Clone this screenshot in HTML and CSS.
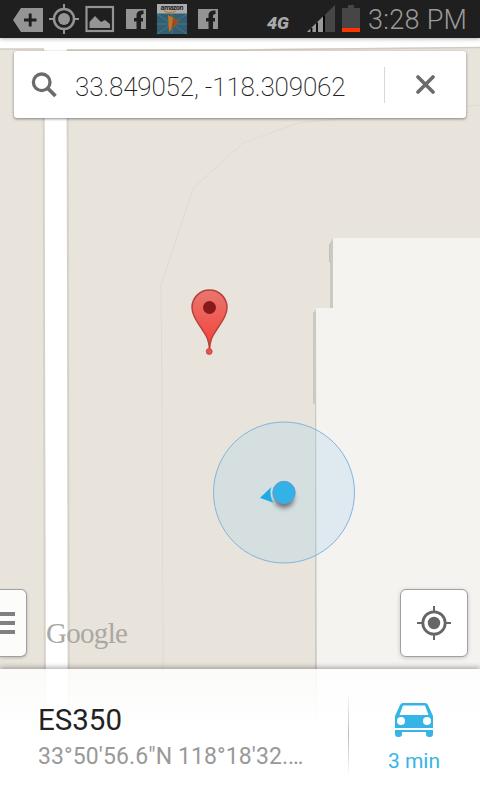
FILE: index.html
```html
<!DOCTYPE html>
<html lang="en">
<head>
<meta charset="utf-8">
<title>Map</title>
<link rel="stylesheet" href="styles.css">
</head>
<body>
<div class="screen">
  <svg class="map" width="480" height="800" viewBox="0 0 480 800">
    <defs>
      <linearGradient id="pin" x1="0" y1="0" x2="0" y2="1"><stop offset="0" stop-color="#e97770"/><stop offset="1" stop-color="#f43f35"/></linearGradient>
      <filter id="soft" x="-50%" y="-50%" width="200%" height="200%"><feGaussianBlur stdDeviation="2.5"/></filter>
    </defs>
    <rect width="480" height="800" fill="#e8e4db"/>
    <path d="M0 37H480V47L240 49H0Z" fill="#fff"/>
    <path d="M0 49H44M67 50H240L480 47.500" stroke="#d3cbc0" stroke-width="1.500" fill="none"/>
    <path d="M44 48H67L68 800H46Z" fill="#fff"/>
    <path d="M43.500 50L45 800M67.500 50L69 800" stroke="#d8d1c7" stroke-width="2" fill="none"/>
    <path d="M163.500 800L162 400L161 286L193 188L243 143L298 123L480 105" stroke="#dedbd4" fill="none"/>
    <path d="M330 243L333 238V308H330ZM314 312L317 308V800H315V404H313V312Z" fill="#cbc9c1"/>
    <path d="M329 244H330V262H329Z" fill="#c3c0b7"/>
    <path d="M333 238H480V800H317L316 308H333Z" fill="#f4f3ef"/>
    <circle cx="284" cy="492.500" r="70.500" fill="#9dcff0" fill-opacity=".25" stroke="#86b3dd"/>
    <circle cx="284" cy="498" r="10" fill="#333" opacity=".65" filter="url(#soft)"/>
    <path d="M259.500 498L271.500 486.500Q269 496 274.500 503.500Z" fill="#20aae5" stroke="#dceaf0" stroke-width=".5"/>
    <circle cx="284" cy="492.500" r="11.200" fill="#34b2e8" stroke="#5b9fc9"/>
    <path d="M209.500 350C209 339 206.500 336 202.500 330C197 321.500 192 315 192 307.500A17.500 17.500 0 0 1 227 307.500C227 315 222 321.500 216.500 330C212.500 336 210 339 209.500 350Z" fill="url(#pin)" stroke="#b6403a" stroke-width="1.500"/>
    <circle cx="209.500" cy="307.500" r="6.500" fill="#851b18"/>
    <circle cx="209.200" cy="351.500" r="3" fill="#ed5249" stroke="#c33f38" stroke-width=".8"/>
  </svg>

  <header class="status">
    <svg class="status-icons" width="360" height="38" viewBox="0 0 360 38">
      <path d="M13 20L21 8H43V32H21Z" fill="#949494"/>
      <path d="M24 20H36.500M30.200 13.500V26.500" stroke="#1f1f1f" stroke-width="2.900"/>
      <g stroke="#949494" fill="none"><circle cx="64" cy="19" r="10" stroke-width="2.500"/><path d="M64 4V10M64 28V34M49 19H55M73 19H79" stroke-width="2"/></g>
      <circle cx="64" cy="19" r="6" fill="#949494"/>
      <rect x="86.500" y="7" width="26.500" height="24" stroke="#949494" stroke-width="2.200" fill="none"/>
      <path d="M89.500 28V22L95 16L101 22L105 20L110 24V28Z" fill="#949494"/>
      <path d="M126 9H146V29H141V21.500H143V18H141V15.500Q141 14 143.500 14V10.500Q136.500 10 136.500 15V18H134V21.500H136.500V29H126Z" fill="#949494"/>
      <path d="M198 9H218V29H213V21.500H215V18H213V15.500Q213 14 215.500 14V10.500Q208.500 10 208.500 15V18H206V21.500H208.500V29H198Z" fill="#949494"/>
      <rect x="157" y="4" width="30" height="30" fill="#345e71"/>
      <path d="M157 14L187 34M157 34L187 14M172 13V34M157 24H187" stroke="#3f7085" stroke-width="1.500"/>
      <rect x="157" y="4" width="30" height="9.500" fill="#acacac"/>
      <text class="amazon" x="160.500" y="9.800" textLength="23">amazon</text>
      <path d="M164 11Q170 14 176 11" stroke="#bd7b21" stroke-width="1.200" fill="none"/>
      <path d="M168 15L179 21L169 32Z" fill="#c27620"/><path d="M173 18L179 21L171 30Z" fill="#9c4b20"/>
      <text class="fourg" x="267" y="29" textLength="22" lengthAdjust="spacingAndGlyphs">4G</text>
      <path d="M307 32L335 5V32Z" fill="#464646"/>
      <path d="M307 32L323 16.500V32Z" fill="#999"/>
      <path d="M311.500 28V32M317 22.500V32M324 15.500V32" stroke="#000" stroke-width="1.800"/>
      <path d="M342 8H348V5H354V8H360V32H342Z" fill="#464646"/>
      <path d="M342 28H360V32H342Z" fill="#ff3500"/>
    </svg>
    <span class="clock">3:28 PM</span>
  </header>

  <div class="search">
    <svg width="30" height="30" viewBox="0 0 30 30"><circle cx="11.700" cy="12.300" r="8.300" stroke="#6b6b6b" stroke-width="3.300" fill="none"/><path d="M18 18.500L25.500 26" stroke="#6b6b6b" stroke-width="3.800"/></svg>
    <span class="query">33.849052, -118.309062</span>
    <span class="clear"><svg width="20" height="20" viewBox="0 0 20 20"><path d="M2 2L17 17M17 2L2 17" stroke="#6b6b6b" stroke-width="3.600" stroke-linecap="round"/></svg></span>
  </div>

  <main class="stage">
    <div class="menu"><i></i><i></i><i></i></div>
    <span class="google">Google</span>
    <div class="locate"><svg width="34" height="34" viewBox="0 0 34 34"><g stroke="#666" fill="none"><circle cx="17" cy="17" r="11.200" stroke-width="2.800"/><path d="M17 0V6M17 28V34M0 17H6M28 17H34" stroke-width="2"/></g><circle cx="17" cy="17" r="6.200" fill="#666"/></svg></div>
  </main>

  <footer class="sheet">
    <div class="place">
      <div class="name"><span>ES350</span></div>
      <div class="coords"><span>33°50'56.6"N 118°18'32.…</span></div>
    </div>
    <div class="route">
      <svg width="38" height="34" viewBox="0 0 38 34"><path fill="#34b5e6" fill-rule="evenodd" d="M0 25V13L5 2Q6 0 8 0H30Q32 0 33 2L38 13V25ZM4.500 12H33.500L30 2.500H8ZM6 14A4 4 0 0 0 6 22A4 4 0 0 0 6 14ZM32 14A4 4 0 0 0 32 22A4 4 0 0 0 32 14ZM0 27H38V31Q38 34 35 34H34Q31 34 31 31V29H7V31Q7 34 4 34H3Q0 34 0 31Z"/></svg>
      <span class="time">3 min</span>
    </div>
  </footer>
</div>
</body>
</html>
```
FILE: styles.css
```css
* { box-sizing: border-box; }
body { margin: 0; font-family: Roboto, sans-serif; }
.screen {
  position: relative;
  width: 480px;
  height: 800px;
  overflow: hidden;
  display: flex;
  flex-direction: column;
}
.map { position: absolute; inset: 0; z-index: -1; }
.status {
  height: 38px;
  flex: none;
  display: flex;
  background: #1f1f1f;
  box-shadow: 0 1px 4px rgba(0, 0, 0, .3);
}
.status-icons { flex: none; }
.clock {
  padding-left: 8px;
  font-size: 27px;
  line-height: 40px;
  font-weight: 300;
  letter-spacing: .3px;
  color: #9a9a9a;
  white-space: nowrap;
}
.amazon { font: bold 6.500px "Open Sans", sans-serif; fill: #222; }
.fourg { font: italic 900 17px Roboto, sans-serif; fill: #aaa; }
.search {
  height: 67px;
  margin: 13px 14px 0;
  padding-left: 16px;
  flex: none;
  display: flex;
  align-items: center;
  background: #fff;
  border-radius: 3px;
  box-shadow: 0 1px 3px rgba(0, 0, 0, .45);
}
.query {
  flex: 1;
  padding: 4px 0 0 15px;
  font-size: 26px;
  line-height: 36px;
  font-weight: 200;
  letter-spacing: -.15px;
  color: #222;
  white-space: nowrap;
}
.clear {
  width: 82px;
  height: 36px;
  display: flex;
  align-items: center;
  justify-content: center;
  border-left: 1px solid #d9d9d9;
}
.stage {
  flex: 1;
  display: flex;
  align-items: flex-end;
  padding: 0 12px 12px 0;
}
.menu {
  width: 27px;
  height: 68px;
  display: flex;
  flex-direction: column;
  justify-content: center;
  gap: 5px;
  background: #fcfcfb;
  border: 1px solid #a0a0a0;
  border-left: 0;
  border-radius: 0 6px 6px 0;
  box-shadow: 0 1px 3px rgba(0, 0, 0, .2);
}
.menu i { width: 15px; height: 4px; background: #808084; }
.google {
  margin: 0 auto 8px 19px;
  font: 29px/32px "Liberation Serif", serif;
  letter-spacing: -.7px;
  color: #aaa8a3;
}
.locate {
  width: 68px;
  height: 68px;
  display: flex;
  align-items: center;
  justify-content: center;
  background: #fff;
  border: 1px solid #a0a0a0;
  border-radius: 6px;
  box-shadow: 0 1px 4px rgba(0, 0, 0, .2);
}
.sheet {
  height: 131px;
  flex: none;
  display: flex;
  background: linear-gradient(rgba(255, 255, 255, .85), #fff 60px);
  box-shadow: 0 -1px 6px rgba(0, 0, 0, .38);
}
.place { width: 348px; padding: 33px 0 0 38px; }
.name { font-size: 29.500px; line-height: 37px; color: #222; }
.coords { font-size: 23px; line-height: 36px; letter-spacing: .1px; color: #999; white-space: nowrap; }
.route {
  flex: 1;
  margin: 24px 0;
  padding: 10px 1px 0 0;
  display: flex;
  flex-direction: column;
  align-items: center;
  border-left: 1px solid;
  border-image: linear-gradient(transparent, #bbb, transparent) 1;
}
.time { margin-top: 10px; font-size: 21px; line-height: 28px; color: #34b5e6; }
```
